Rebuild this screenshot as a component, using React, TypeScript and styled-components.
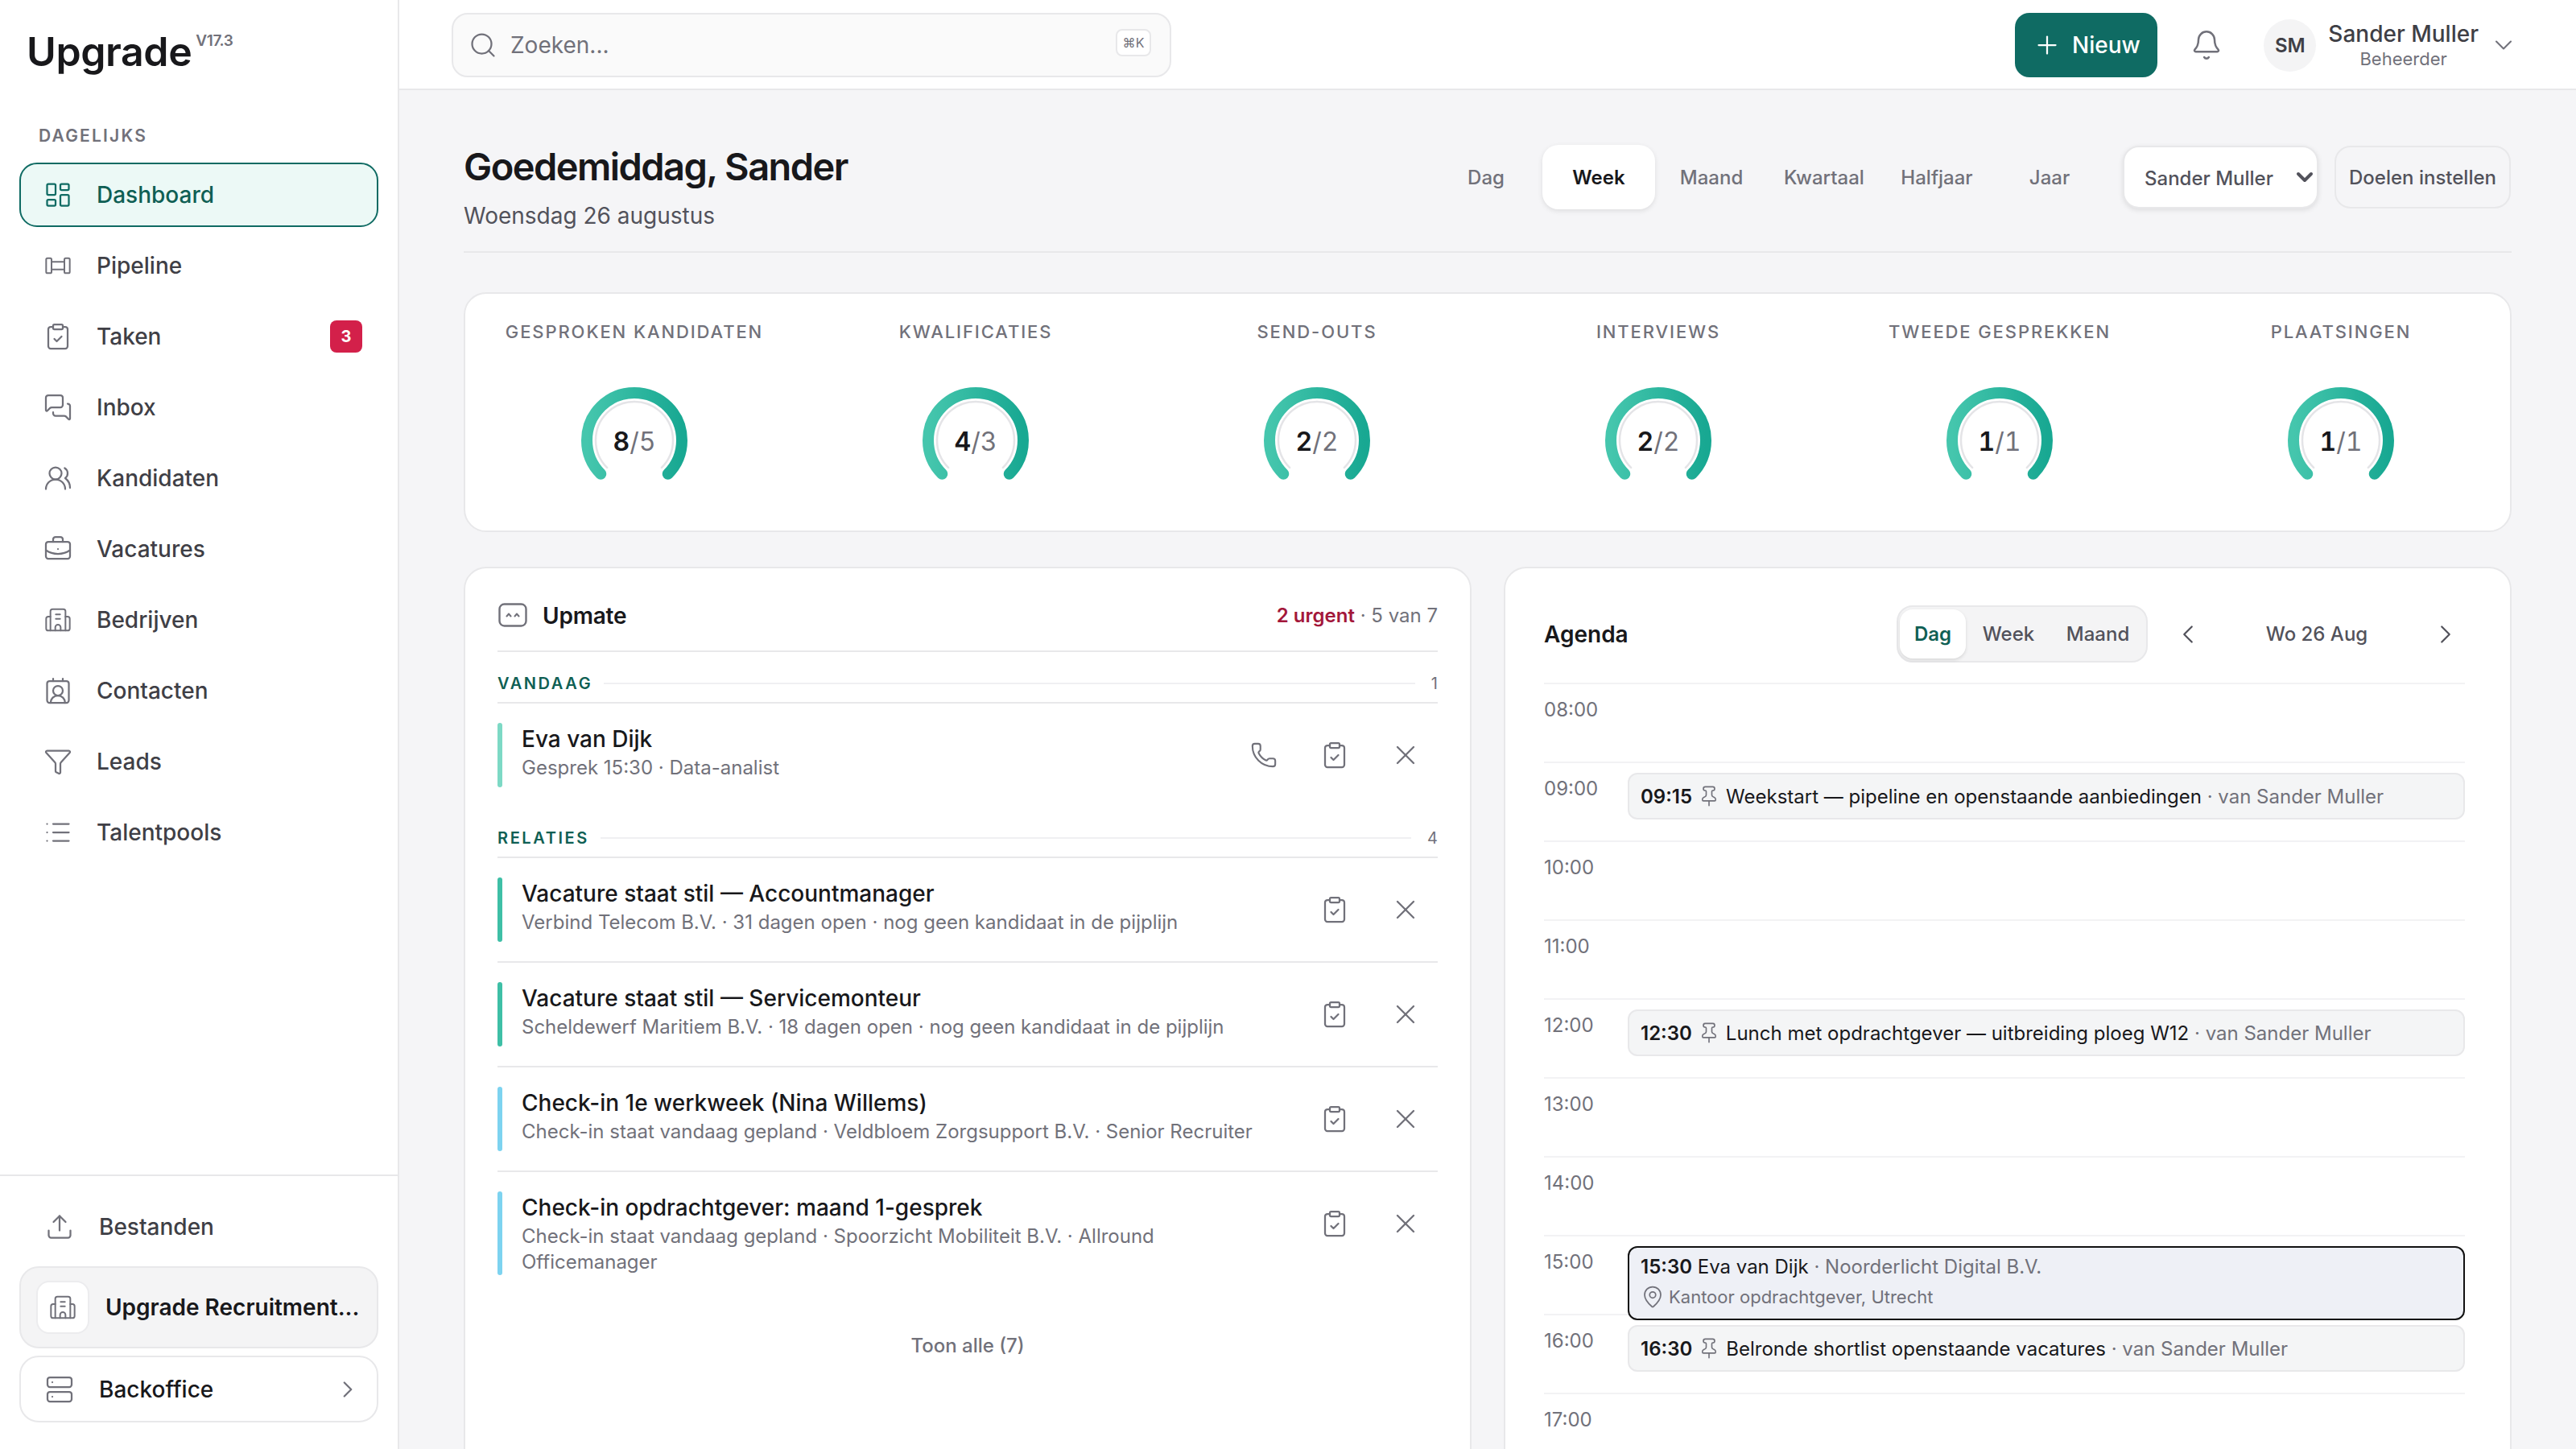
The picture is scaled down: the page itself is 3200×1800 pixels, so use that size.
import React from "react";
import styled, { createGlobalStyle } from "styled-components";
import {
  LayoutDashboard, ClipboardCheck, MessagesSquare, UsersRound, BriefcaseBusiness, ContactRound, Funnel, List,
  Upload, Server, ChevronRight, ChevronLeft, ChevronDown, Search, Bell, Plus, Phone, X, Pin, MapPin,
} from "lucide-react";

const Global = createGlobalStyle`
  html, body { margin: 0; padding: 0; background: #f5f5f7; }
  * { box-sizing: border-box; }
  body { font-family: Inter, "Liberation Sans", sans-serif; color: #18181b; }
`;

const Shell = styled.div`display: flex; width: 3200px; height: 1800px; overflow: hidden;`;
const Sidebar = styled.aside`
  width: 496px; flex: none; height: 1800px; background: #fff; border-right: 2px solid #e8e8ea;
  display: flex; flex-direction: column;
`;
const LogoRow = styled.div`display: flex; align-items: flex-start; padding: 36px 0 0 33px; height: 156px;`;
const Logo = styled.div`font-size: 50px; line-height: 56px; font-weight: 600; letter-spacing: -0.4px; color: #18181b;`;
const Version = styled.span`font-size: 19px; line-height: 22px; font-weight: 600; color: #71717a; margin: 4px 0 0 5px; letter-spacing: -0.4px;`;
const SectionLabel = styled.div`
  font-size: 21px; line-height: 26px; font-weight: 600; letter-spacing: 2.2px; color: #71717a;
  padding-left: 48px; margin-bottom: 20px;
`;
const Nav = styled.nav`display: flex; flex-direction: column; gap: 8px; padding: 0 24px;`;
const NavItem = styled.div<{ $active?: boolean }>`
  height: 80px; display: flex; align-items: center; gap: 30px; padding: 0 18px 0 28px; border-radius: 22px;
  border: 2px solid ${(p) => (p.$active ? "#0f6b63" : "transparent")};
  background: ${(p) => (p.$active ? "#ecf9f6" : "transparent")};
  color: ${(p) => (p.$active ? "#0f5f54" : "#3f3f46")};
  font-size: 28px; font-weight: 500;
  svg { color: ${(p) => (p.$active ? "#0f6b63" : "#71717a")}; flex: none; }
`;
const NavText = styled.span`flex: 1;`;
const Badge = styled.span`
  width: 40px; height: 40px; border-radius: 8px; background: #d3204a; color: #fff; font-size: 20px; font-weight: 700;
  display: flex; align-items: center; justify-content: center;
`;
const SideFooter = styled.div`
  margin-top: auto; border-top: 2px solid #e8e8ea; padding: 23px 24px 33px; display: flex; flex-direction: column; gap: 9px;
`;
const FileLink = styled.div`
  height: 80px; display: flex; align-items: center; gap: 31px; padding-left: 32px; font-size: 28px; font-weight: 500; color: #3f3f46;
  svg { color: #71717a; flex: none; }
`;
const OrgBox = styled.div`
  height: 102px; display: flex; align-items: center; gap: 20px; padding: 0 0 0 19px; border-radius: 24px;
  background: #f4f4f5; border: 2px solid #e8e8ea;
`;
const OrgTile = styled.div`
  width: 66px; height: 66px; flex: none; border-radius: 16px; background: #fff; border: 2px solid #ececee; color: #71717a;
  display: flex; align-items: center; justify-content: center;
`;
const OrgName = styled.div`font-size: 28px; font-weight: 600; white-space: nowrap;`;
const BackBox = styled.div`
  height: 83px; display: flex; align-items: center; gap: 31px; padding: 0 19px 0 30px; border-radius: 24px;
  background: #fff; border: 2px solid #e8e8ea; font-size: 28px; font-weight: 500; color: #18181b;
  svg { color: #71717a; flex: none; }
`;

const Main = styled.div`flex: 1; min-width: 0; display: flex; flex-direction: column; height: 1800px; overflow: hidden;`;
const Topbar = styled.header`
  height: 112px; flex: none; background: #fff; border-bottom: 2px solid #e8e8ea; display: flex; align-items: center; padding: 2px 72px 0 65px;
`;
const SearchBox = styled.div`
  width: 894px; height: 80px; border-radius: 20px; border: 2px solid #e8e8ea; background: #fafafa; display: flex; align-items: center;
  padding: 0 23px 0 19px; gap: 16px; color: #71717a; font-size: 28px;
  svg { flex: none; }
`;
const SearchText = styled.span`flex: 1;`;
const Kbd = styled.span`
  width: 44px; height: 34px; margin-top: -6px; border: 2px solid #e8e8ea; border-radius: 8px; background: #fff; font-size: 16px; color: #71717a;
  display: flex; align-items: center; justify-content: center;
`;
const TopRight = styled.div`margin-left: auto; display: flex; align-items: center;`;
const NewButton = styled.div`
  width: 177px; height: 80px; border-radius: 18px; background: #0f6b63; color: #fff; display: flex; align-items: center; justify-content: center; gap: 13px;
  font-size: 28px; font-weight: 500;
`;
const BellWrap = styled.div`margin: 0 51px 0 41px; width: 40px; height: 40px; color: #71717a;`;
const Avatar = styled.div`
  width: 65px; height: 65px; border-radius: 50%; background: #f4f4f5; display: flex; align-items: center; justify-content: center;
  font-size: 24px; font-weight: 600; color: #3f3f46;
`;
const UserBlock = styled.div`margin: 0 13px 0 15px; display: flex; flex-direction: column; align-items: center;`;
const UserName = styled.div`font-size: 28px; line-height: 34px; font-weight: 500; color: #3f3f46;`;
const UserRole = styled.div`font-size: 22px; line-height: 28px; color: #71717a;`;

const Content = styled.main`flex: 1; min-height: 0; padding: 0 80px; background: #f5f5f7;`;
const Header = styled.div`
  display: flex; justify-content: space-between; align-items: flex-start; height: 202px; padding-top: 64px; border-bottom: 2px solid #e8e8ea;
`;
const Title = styled.h1`margin: 0; font-size: 47px; line-height: 62px; font-weight: 600; letter-spacing: -1.55px;`;
const Subtitle = styled.div`font-size: 28px; line-height: 40px; margin-top: 10px; color: #52525b;`;
const Controls = styled.div`display: flex; align-items: center; margin: 4px 1px 0 0;`;
const Periods = styled.div`display: grid; grid-template-columns: repeat(6, 140px); margin-right: 21px;`;
const Period = styled.div<{ $active?: boolean }>`
  height: 80px; border-radius: 20px; display: flex; align-items: center; justify-content: center; font-size: 24px; font-weight: ${(p) => (p.$active ? 600 : 500)};
  color: ${(p) => (p.$active ? "#18181b" : "#71717a")};
  background: ${(p) => (p.$active ? "#fff" : "transparent")};
  box-shadow: ${(p) => (p.$active ? "0 2px 6px rgba(0,0,0,.1)" : "none")};
`;
const SelectWrap = styled.div`
  position: relative; margin-right: 20px; color: #52525b;
  svg { position: absolute; right: 1px; top: 23px; pointer-events: none; }
`;
const PersonSelect = styled.select`
  display: block; width: 243px; height: 78px; border: 2px solid #e8e8ea; border-radius: 20px; background-color: #fff; padding: 3px 0 0 25px; font-family: Inter, sans-serif;
  appearance: none; font-size: 24px; font-weight: 500; color: #52525b; box-shadow: 0 2px 6px rgba(0,0,0,.1);
`;
const GoalButton = styled.div`
  width: 219px; height: 78px; border: 2px solid #e8e8ea; border-radius: 20px; display: flex; align-items: center; justify-content: center;
  font-size: 24px; font-weight: 500; color: #52525b;
`;

const KpiCard = styled.section`
  margin-top: 49px; height: 298px; background: #fff; border: 2px solid #e8e8ea; border-radius: 28px; padding-top: 32px;
`;
const KpiGrid = styled.div`display: grid; grid-template-columns: repeat(6, 1fr); margin: 0 -2px;`;
const Kpi = styled.div`display: flex; flex-direction: column; align-items: center;`;
const KpiLabel = styled.div`font-size: 22px; line-height: 30px; font-weight: 500; letter-spacing: 1.9px; color: #71717a; white-space: nowrap;`;
const GaugeWrap = styled.div`position: relative; width: 140px; height: 130px; margin-top: 50px;`;
const GaugeValue = styled.div`
  position: absolute; left: 0; right: 0; top: 52px; text-align: center; font-size: 32px; line-height: 40px; color: #71717a; font-variant-numeric: tabular-nums;
  b { font-weight: 600; color: #18181b; }
`;

const Columns = styled.div`display: grid; grid-template-columns: 1fr 1fr; gap: 40px; margin-top: 43px;`;
const Card = styled.section`height: 1200px; background: #fff; border: 2px solid #e8e8ea; border-radius: 28px;`;
const UpmateCard = styled(Card)`padding: 32px 40px 0;`;
const CardHead = styled.div`
  height: 72px; display: flex; align-items: flex-start; border-bottom: 2px solid #e8e8ea; padding-top: 11px; font-size: 24px; color: #71717a; line-height: 32px;
`;
const HeadIcon = styled.span`display: flex; margin-left: 1px;`;
const CardTitle = styled.div`font-size: 28px; font-weight: 600; color: #18181b; margin-left: 19px; letter-spacing: -0.2px;`;
const CardMeta = styled.div`margin-left: auto;`;
const Urgent = styled.span`color: #a3173a; font-weight: 600;`;
const Section = styled.div`
  height: 64px; padding-top: 15px; border-bottom: 2px solid #e8e8ea; display: flex; align-items: center; gap: 14px; font-size: 20px; color: #71717a;
`;
const SectionName = styled.span`font-weight: 600; color: #0f5f54; letter-spacing: 2.6px;`;
const SectionRule = styled.span`flex: 1; height: 2px; background: #f0f0f2;`;
const SectionCount = styled.span`margin-left: 6px;`;
const Row = styled.div<{ $divider?: boolean }>`
  display: flex; padding: 24px 0; border-bottom: ${(p) => (p.$divider ? "2px solid #e8e8ea" : "none")};
`;
const Accent = styled.div<{ $color: string }>`width: 6px; flex: none; border-radius: 3px; background: ${(p) => p.$color}; margin-right: 24px;`;
const RowBody = styled.div`flex: 1; min-width: 0; min-height: 80px;`;
const RowTitle = styled.div`font-size: 28px; line-height: 40px; font-weight: 500; color: #18181b;`;
const RowSub = styled.div`font-size: 24px; line-height: 32px; color: #71717a;`;
const Actions = styled.div`display: flex; align-items: center; gap: 32px; height: 80px; padding: 0 12px 0 24px; color: #71717a; flex: none;`;
const ActionButton = styled.span`width: 56px; height: 56px; display: flex; align-items: center; justify-content: center;`;
const ShowAll = styled.div`margin-top: 44px; text-align: center; font-size: 24px; line-height: 40px; font-weight: 500; color: #71717a;`;

const AgendaCard = styled(Card)`padding: 0 56px 0 48px;`;
const AgendaHead = styled.div`height: 142px; padding: 46px 0 25px; display: flex; align-items: center;`;
const AgendaTitle = styled.div`font-size: 28px; font-weight: 600; flex: 1;`;
const ViewTabs = styled.div`
  height: 71px; width: 312px; display: flex; align-items: stretch; padding: 3px 2px; background: #f4f4f5; border: 2px solid #e8e8ea; border-radius: 20px; margin-right: 26px;
`;
const ViewTab = styled.div<{ $active?: boolean; $w: number }>`
  width: ${(p) => p.$w}px; border-radius: 16px; display: flex; align-items: center; justify-content: center; font-size: 24px;
  color: ${(p) => (p.$active ? "#0f5f54" : "#52525b")}; font-weight: ${(p) => (p.$active ? 600 : 500)};
  background: ${(p) => (p.$active ? "#fff" : "transparent")};
  box-shadow: ${(p) => (p.$active ? "0 2px 4px rgba(0,0,0,.12)" : "none")};
`;
const DayNav = styled.div`display: flex; align-items: center; color: #52525b;`;
const DayArrow = styled.span`width: 48px; display: flex; justify-content: center;`;
const DayLabel = styled.div`width: 272px; text-align: center; font-size: 24px; font-weight: 500;`;
const HourRow = styled.div`display: flex; height: 98px; border-top: 2px solid #f2f2f4;`;
const HourLabel = styled.div`width: 104px; flex: none; padding-top: 16px; font-size: 24px; line-height: 32px; color: #71717a;`;
const HourBody = styled.div`flex: 1; min-width: 0; padding-top: 12px;`;
const Event = styled.div`
  height: 58px; display: flex; align-items: center; gap: 7px; padding: 0 14px; border: 2px solid #e8e8ea; border-radius: 12px; background: #f4f5f6;
  font-size: 24px; color: #18181b; position: relative; z-index: 1;
  svg { color: #71717a; flex: none; }
`;
const Time = styled.b`font-weight: 600;`;
const Muted = styled.span`color: #71717a;`;
const LiveEvent = styled.div`
  height: 92px; padding: 8px 14px 0; border: 2px solid #111; border-radius: 12px; background: #eef0f6; position: relative; z-index: 1;
  font-size: 24px; line-height: 32px;
`;
const LiveLine = styled.div`display: flex; align-items: center; gap: 5px; margin-top: 5px; font-size: 22px; color: #71717a; svg { flex: none; }`;

const PipelineIcon = () => (
  <svg width="36" height="36" viewBox="-1.5 -1.5 27 27" fill="none" stroke="currentColor" strokeWidth="1.5" strokeLinecap="round" strokeLinejoin="round">
    <rect x="1" y="5" width="5" height="14" rx="1.2" /><rect x="18" y="5" width="5" height="14" rx="1.2" />
    <path d="M6 8.5h12M6 15.5h12" />
  </svg>
);
const BuildingIcon = () => (
  <svg width="36" height="36" viewBox="-1.5 -1.5 27 27" fill="none" stroke="currentColor" strokeWidth="1.5" strokeLinecap="round" strokeLinejoin="round">
    <path d="M5 22V4a2 2 0 0 1 2-2h10a2 2 0 0 1 2 2v18" />
    <path d="M5 9H3a2 2 0 0 0-2 2v9a2 2 0 0 0 2 2h18a2 2 0 0 0 2-2v-9a2 2 0 0 0-2-2h-2" />
    <path d="M10 7h4M10 11h4M9.5 22v-3a2.5 2.5 0 0 1 5 0v3" />
  </svg>
);
const UpmateIcon = () => (
  <svg width="36" height="30" viewBox="0 0 36 30" fill="none" stroke="#71717a" strokeWidth="2.4" strokeLinecap="round" strokeLinejoin="round">
    <rect x="1.5" y="1.5" width="33" height="27" rx="6" />
    <path d="M10.5 16.5l2.5-3 2.5 3M20.5 16.5l2.5-3 2.5 3" strokeWidth="2" />
  </svg>
);

const kpis: [string, number, number][] = [
  ["GESPROKEN KANDIDATEN", 8, 5], ["KWALIFICATIES", 4, 3], ["SEND-OUTS", 2, 2], ["INTERVIEWS", 2, 2], ["TWEEDE GESPREKKEN", 1, 1], ["PLAATSINGEN", 1, 1],
];

const Gauge = ({ id, a, b }: { id: number; a: number; b: number }) => (
  <GaugeWrap>
    <svg width="140" height="130" viewBox="0 0 140 130" fill="none" strokeLinecap="round">
      <defs>
        <linearGradient id={`g${id}`} x1="0" y1="0" x2="1" y2="0">
          <stop offset="0" stopColor="#45c6ad" /><stop offset="1" stopColor="#18a892" />
        </linearGradient>
      </defs>
      <path d="M36.1 103.9A48 48 0 1 1 103.9 103.9" stroke="#e4e4e7" strokeWidth="2.5" />
      <path d="M28.3 111.7A59 59 0 1 1 111.7 111.7" stroke={`url(#g${id})`} strokeWidth="14" />
    </svg>
    <GaugeValue><b>{a}</b>/{b}</GaugeValue>
  </GaugeWrap>
);

const navItems: [string, React.ReactNode][] = [
  ["Dashboard", <LayoutDashboard size={36} strokeWidth={1.5} />],
  ["Pipeline", <PipelineIcon />],
  ["Taken", <ClipboardCheck size={36} strokeWidth={1.5} />],
  ["Inbox", <MessagesSquare size={36} strokeWidth={1.5} />],
  ["Kandidaten", <UsersRound size={36} strokeWidth={1.5} />],
  ["Vacatures", <BriefcaseBusiness size={36} strokeWidth={1.5} />],
  ["Bedrijven", <BuildingIcon />],
  ["Contacten", <ContactRound size={36} strokeWidth={1.5} />],
  ["Leads", <Funnel size={36} strokeWidth={1.5} />],
  ["Talentpools", <List size={36} strokeWidth={1.5} />],
];

const periods = ["Dag", "Week", "Maand", "Kwartaal", "Halfjaar", "Jaar"];

const RowActions = ({ phone }: { phone?: boolean }) => (
  <Actions>
    {phone && <ActionButton><Phone size={34} strokeWidth={1.5} /></ActionButton>}
    <ActionButton><ClipboardCheck size={36} strokeWidth={1.5} /></ActionButton>
    <ActionButton><X size={40} strokeWidth={1.4} /></ActionButton>
  </Actions>
);

const relaties: [string, string, string, boolean][] = [
  ["Vacature staat stil — Accountmanager", "Verbind Telecom B.V. · 31 dagen open · nog geen kandidaat in de pijplijn", "#3ebfa6", true],
  ["Vacature staat stil — Servicemonteur", "Scheldewerf Maritiem B.V. · 18 dagen open · nog geen kandidaat in de pijplijn", "#3ebfa6", true],
  ["Check-in 1e werkweek (Nina Willems)", "Check-in staat vandaag gepland · Veldbloem Zorgsupport B.V. · Senior Recruiter", "#7dd3f0", true],
  ["Check-in opdrachtgever: maand 1-gesprek", "Check-in staat vandaag gepland · Spoorzicht Mobiliteit B.V. · Allround Officemanager", "#7dd3f0", false],
];

const hours = ["08:00", "09:00", "10:00", "11:00", "12:00", "13:00", "14:00", "15:00", "16:00", "17:00"];
const events: Record<string, [string, string]> = {
  "09:00": ["09:15", "Weekstart — pipeline en openstaande aanbiedingen"],
  "12:00": ["12:30", "Lunch met opdrachtgever — uitbreiding ploeg W12"],
  "16:00": ["16:30", "Belronde shortlist openstaande vacatures"],
};

export default function App() {
  return (
    <>
      <Global />
      <Shell>
        <Sidebar>
          <LogoRow><Logo>Upgrade</Logo><Version>V17.3</Version></LogoRow>
          <SectionLabel>DAGELIJKS</SectionLabel>
          <Nav>
            {navItems.map(([name, icon], i) => (
              <NavItem key={name} $active={i === 0}>
                {icon}
                <NavText>{name}</NavText>
                {name === "Taken" && <Badge>3</Badge>}
              </NavItem>
            ))}
          </Nav>
          <SideFooter>
            <FileLink><Upload size={36} strokeWidth={1.5} />Bestanden</FileLink>
            <OrgBox><OrgTile><BuildingIcon /></OrgTile><OrgName>Upgrade Recruitment...</OrgName></OrgBox>
            <BackBox><Server size={36} strokeWidth={1.5} /><NavText>Backoffice</NavText><ChevronRight size={34} strokeWidth={1.6} /></BackBox>
          </SideFooter>
        </Sidebar>
        <Main>
          <Topbar>
            <SearchBox>
              <Search size={36} strokeWidth={1.5} />
              <SearchText>Zoeken...</SearchText>
              <Kbd>⌘K</Kbd>
            </SearchBox>
            <TopRight>
              <NewButton><Plus size={36} strokeWidth={1.5} />Nieuw</NewButton>
              <BellWrap><Bell size={40} strokeWidth={1.5} /></BellWrap>
              <Avatar>SM</Avatar>
              <UserBlock><UserName>Sander Muller</UserName><UserRole>Beheerder</UserRole></UserBlock>
              <ChevronDown size={36} strokeWidth={1.4} color="#71717a" />
            </TopRight>
          </Topbar>
          <Content>
            <Header>
              <div>
                <Title>Goedemiddag, Sander</Title>
                <Subtitle>Woensdag 26 augustus</Subtitle>
              </div>
              <Controls>
                <Periods>
                  {periods.map((p) => <Period key={p} $active={p === "Week"}>{p}</Period>)}
                </Periods>
                <SelectWrap>
                  <PersonSelect defaultValue="Sander Muller"><option>Sander Muller</option></PersonSelect>
                  <ChevronDown size={32} strokeWidth={3} />
                </SelectWrap>
                <GoalButton>Doelen instellen</GoalButton>
              </Controls>
            </Header>
            <KpiCard>
              <KpiGrid>
                {kpis.map(([label, a, b], i) => (
                  <Kpi key={label}>
                    <KpiLabel>{label}</KpiLabel>
                    <Gauge id={i} a={a} b={b} />
                  </Kpi>
                ))}
              </KpiGrid>
            </KpiCard>
            <Columns>
              <UpmateCard>
                <CardHead>
                  <HeadIcon><UpmateIcon /></HeadIcon>
                  <CardTitle>Upmate</CardTitle>
                  <CardMeta><Urgent>2 urgent</Urgent> · 5 van 7</CardMeta>
                </CardHead>
                <Section><SectionName>VANDAAG</SectionName><SectionRule /><SectionCount>1</SectionCount></Section>
                <Row>
                  <Accent $color="#7dd9c5" />
                  <RowBody>
                    <RowTitle>Eva van Dijk</RowTitle>
                    <RowSub>Gesprek 15:30 · Data-analist</RowSub>
                  </RowBody>
                  <RowActions phone />
                </Row>
                <Section><SectionName>RELATIES</SectionName><SectionRule /><SectionCount>4</SectionCount></Section>
                {relaties.map(([t, s, c, d]) => (
                  <Row key={t} $divider={d}>
                    <Accent $color={c} />
                    <RowBody><RowTitle>{t}</RowTitle><RowSub>{s}</RowSub></RowBody>
                    <RowActions />
                  </Row>
                ))}
                <ShowAll>Toon alle (7)</ShowAll>
              </UpmateCard>
              <AgendaCard>
                <AgendaHead>
                  <AgendaTitle>Agenda</AgendaTitle>
                  <ViewTabs>
                    <ViewTab $active $w={82}>Dag</ViewTab>
                    <ViewTab $w={106}>Week</ViewTab>
                    <ViewTab $w={116}>Maand</ViewTab>
                  </ViewTabs>
                  <DayNav>
                    <DayArrow><ChevronLeft size={38} strokeWidth={1.4} /></DayArrow>
                    <DayLabel>Wo 26 Aug</DayLabel>
                    <DayArrow><ChevronRight size={38} strokeWidth={1.4} /></DayArrow>
                  </DayNav>
                </AgendaHead>
                {hours.map((h) => (
                  <HourRow key={h}>
                    <HourLabel>{h}</HourLabel>
                    <HourBody>
                      {events[h] && (
                        <Event>
                          <Time>{events[h][0]}</Time>
                          <Pin size={28} strokeWidth={1.4} />
                          <span>{events[h][1]}<Muted> · van Sander Muller</Muted></span>
                        </Event>
                      )}
                      {h === "15:00" && (
                        <LiveEvent>
                          <div><Time>15:30</Time> Eva van Dijk<Muted> · Noorderlicht Digital B.V.</Muted></div>
                          <LiveLine><MapPin size={30} strokeWidth={1.4} />Kantoor opdrachtgever, Utrecht</LiveLine>
                        </LiveEvent>
                      )}
                    </HourBody>
                  </HourRow>
                ))}
              </AgendaCard>
            </Columns>
          </Content>
        </Main>
      </Shell>
    </>
  );
}
